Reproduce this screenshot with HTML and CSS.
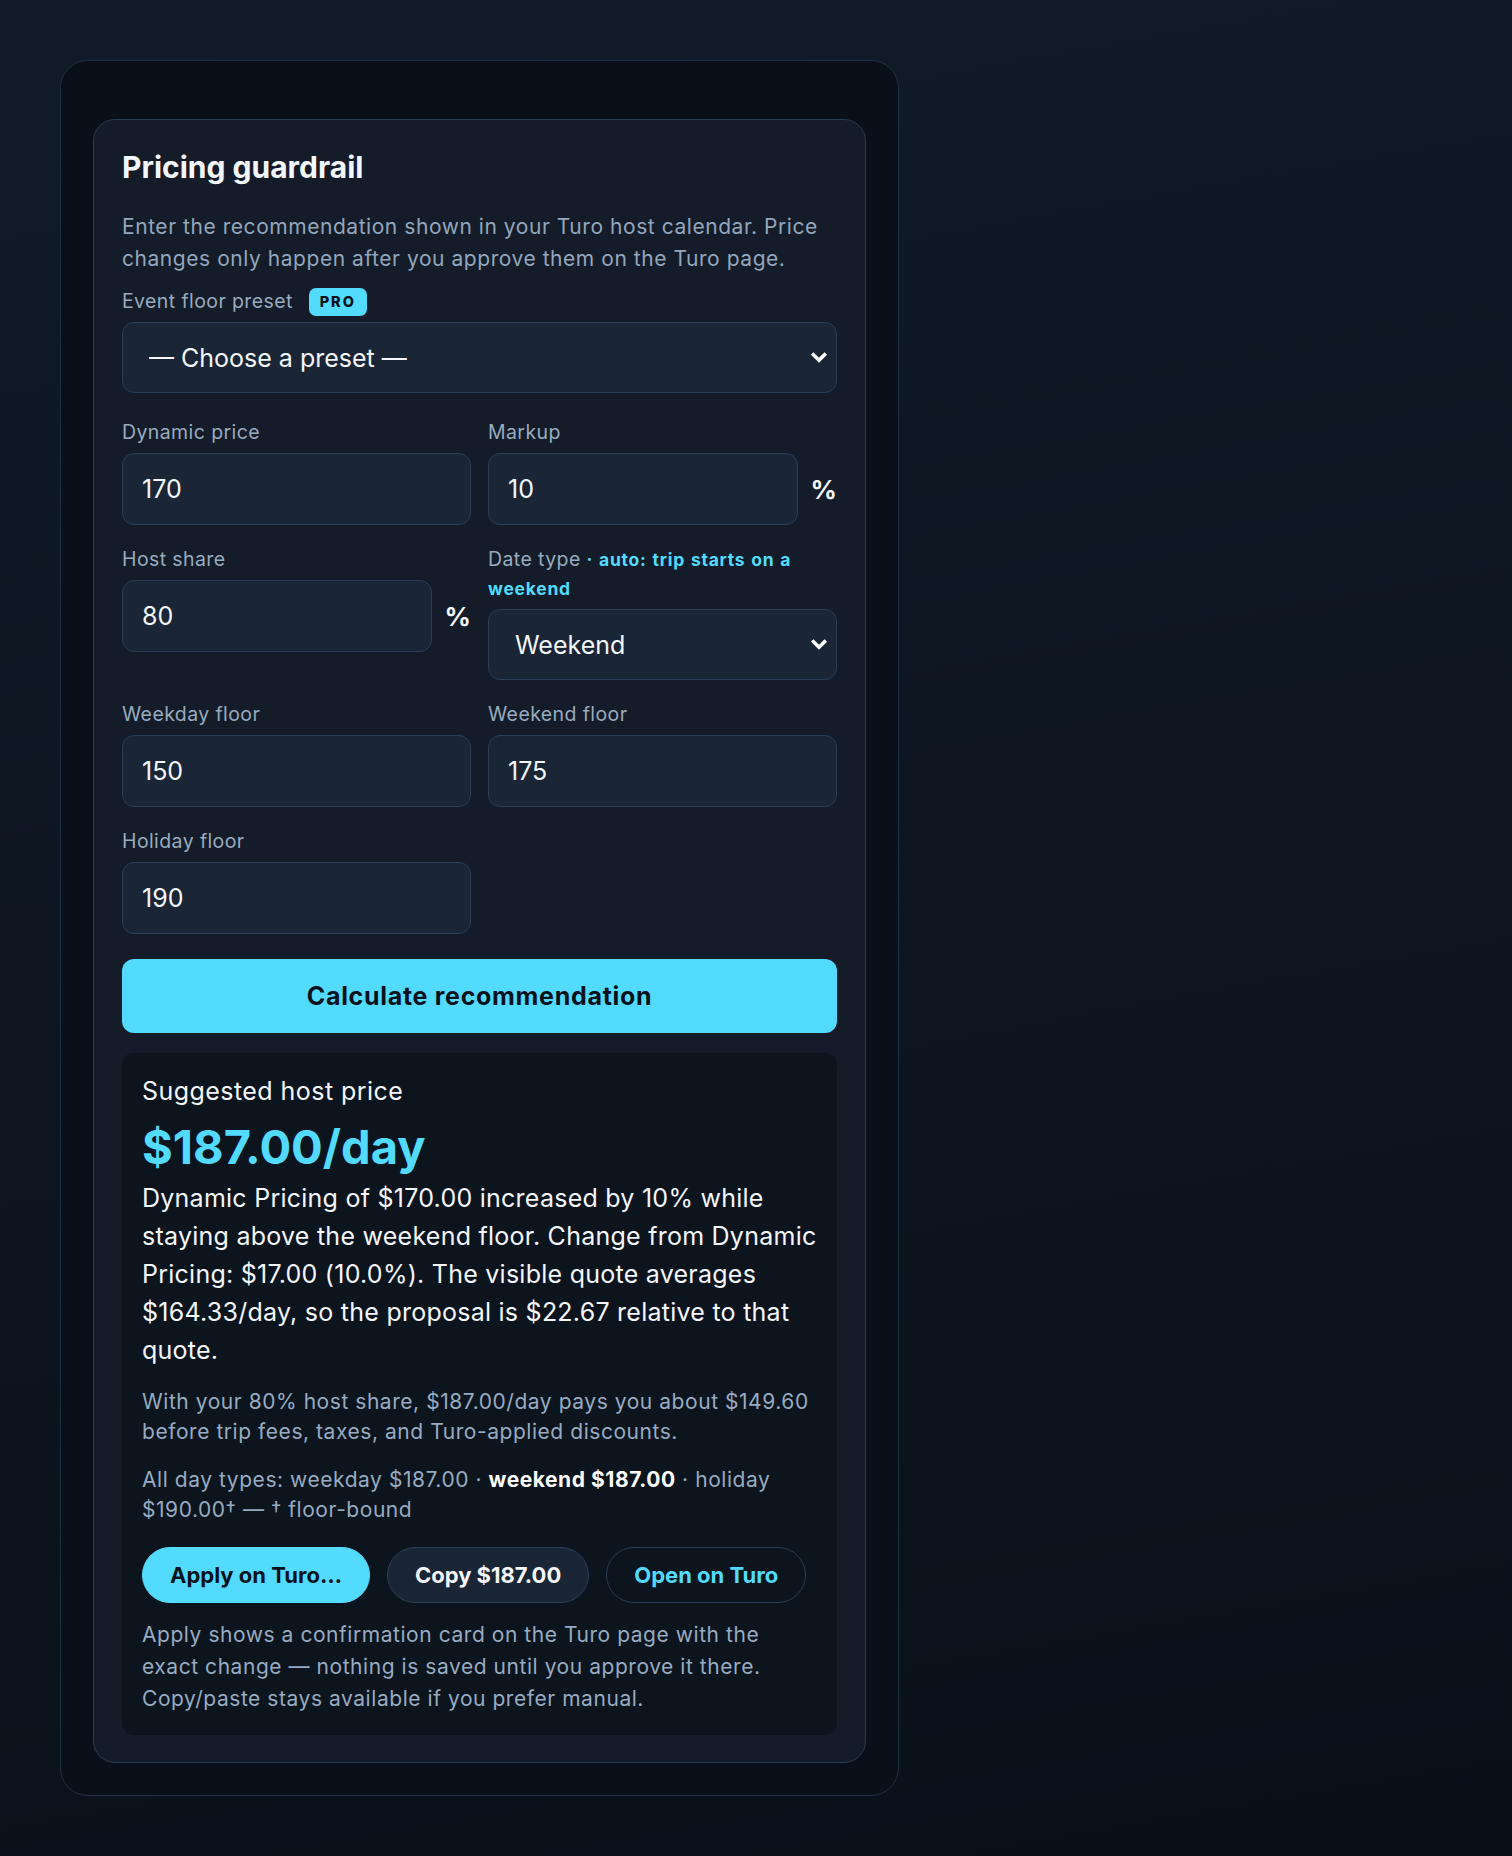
FILE: index.html
```html
<!DOCTYPE html>
<html lang="en">
<head>
  <meta charset="UTF-8">
  <meta name="viewport" content="width=device-width, initial-scale=1.0">
  <title>Pricing guardrail</title>
  <link rel="stylesheet" href="styles.css">
</head>
<body>

<div class="shell">
  <section class="panel">
    <h2 class="panel-title">Pricing guardrail</h2>
    <p class="panel-intro">Enter the recommendation shown in your Turo host calendar. Price changes only happen after you approve them on the Turo page.</p>

    <!-- Preset picker -->
    <div class="field field-preset">
      <label for="preset">Event floor preset <span class="badge">PRO</span></label>
      <div class="select-wrap">
        <select id="preset">
          <option>— Choose a preset —</option>
        </select>
        <svg class="chevron" width="18" height="12" viewBox="0 0 18 12"><polyline points="2.2,2.4 9,9.2 15.8,2.4" fill="none" stroke="#fff" stroke-width="3.6"/></svg>
      </div>
    </div>

    <!-- Price inputs -->
    <div class="field-grid">
      <div class="field">
        <label for="dynamicPrice">Dynamic price</label>
        <input id="dynamicPrice" type="text" value="170">
      </div>
      <div class="field">
        <label for="markup">Markup</label>
        <div class="with-unit">
          <input id="markup" type="text" value="10">
          <span class="unit">%</span>
        </div>
      </div>
      <div class="field">
        <label for="hostShare">Host share</label>
        <div class="with-unit">
          <input id="hostShare" type="text" value="80">
          <span class="unit">%</span>
        </div>
      </div>
      <div class="field">
        <label for="dateType">Date type <span class="hint">· auto: trip starts on a weekend</span></label>
        <div class="select-wrap">
          <select id="dateType">
            <option>Weekday</option>
            <option selected>Weekend</option>
            <option>Holiday</option>
          </select>
          <svg class="chevron" width="18" height="12" viewBox="0 0 18 12"><polyline points="2.2,2.4 9,9.2 15.8,2.4" fill="none" stroke="#fff" stroke-width="3.6"/></svg>
        </div>
      </div>
      <div class="field">
        <label for="weekdayFloor">Weekday floor</label>
        <input id="weekdayFloor" type="text" value="150">
      </div>
      <div class="field">
        <label for="weekendFloor">Weekend floor</label>
        <input id="weekendFloor" type="text" value="175">
      </div>
      <div class="field">
        <label for="holidayFloor">Holiday floor</label>
        <input id="holidayFloor" type="text" value="190">
      </div>
    </div>

    <button class="calc">Calculate recommendation</button>

    <!-- Result card -->
    <div class="result">
      <div class="result-label">Suggested host price</div>
      <div class="result-price">$187.00/day</div>
      <p class="result-summary">Dynamic Pricing of $170.00 increased by 10% while staying above the weekend floor. Change from Dynamic Pricing: $17.00 (10.0%). The visible quote averages $164.33/day, so the proposal is $22.67 relative to that quote.</p>
      <p class="result-note">With your 80% host share, $187.00/day pays you about $149.60 before trip fees, taxes, and Turo-applied discounts.</p>
      <p class="result-note">All day types: weekday $187.00 · <strong>weekend $187.00</strong> · holiday $190.00† — † floor-bound</p>
      <div class="actions">
        <button class="pill pill-primary">Apply on Turo…</button>
        <button class="pill pill-dark">Copy $187.00</button>
        <button class="pill pill-ghost">Open on Turo</button>
      </div>
      <p class="result-note result-foot">Apply shows a confirmation card on the Turo page with the exact change — nothing is saved until you approve it there. Copy/paste stays available if you prefer manual.</p>
    </div>
  </section>
</div>

</body>
</html>
```

FILE: styles.css
```css
* {
  box-sizing: border-box;
}
body {
  margin: 0;
  min-height: 1856px;
  padding: 60px 0 0 60px;
  font-family: Inter, "Noto Sans", "Liberation Sans", sans-serif;
  color: #f1f5f9;
  background: linear-gradient(170deg, #111c28 0%, #0d1621 45%, #09101a 100%);
}
.shell {
  width: 839px;
  padding: 58px 32px 32px;
  background-color: #0a1019;
  border: 1px solid #1f3043;
  border-radius: 28px;
}
.panel {
  padding: 28px 28px 27px;
  background-color: #131c28;
  border: 1px solid #2a3c51;
  border-radius: 22px;
}
.panel-title {
  margin: 0;
  font-size: 30px;
  line-height: 38px;
  font-weight: 700;
  color: #f4f7fb;
}
.panel-intro {
  margin: 25px 0 0;
  font-size: 21px;
  line-height: 32px;
  color: #93a6bc;
  letter-spacing: 0.55px;
}

/* Form fields */
.field label {
  display: block;
  margin-bottom: 6px;
  font-size: 19.5px;
  line-height: 29px;
  letter-spacing: 0.4px;
  color: #9aabbf;
}
.field-preset {
  margin-top: 12px;
}
.badge {
  display: inline-block;
  margin-left: 10px;
  padding: 0 11px;
  height: 28px;
  line-height: 28px;
  vertical-align: 1px;
  border-radius: 7px;
  background-color: #52dbff;
  color: #061018;
  font-size: 14.5px;
  font-weight: 800;
  letter-spacing: 2px;
}
.hint {
  color: #52dbff;
  font-size: 17.5px;
  font-weight: 700;
  letter-spacing: 0.75px;
  word-spacing: 1px;
}
.field input,
.field select {
  width: 100%;
  height: 72px;
  background-color: #1a2536;
  border: 1.5px solid #2b3e55;
  border-radius: 12px;
  color: #f4f7fb;
  font-family: inherit;
  outline: none;
}
.field input {
  padding: 0 19px;
  font-size: 25px;
}
.field select {
  -webkit-appearance: none;
  appearance: none;
  height: 71px;
  padding: 0 40px 0 26px;
  font-size: 25px;
}
.select-wrap {
  position: relative;
}
.chevron {
  position: absolute;
  right: 9px;
  top: 29px;
  pointer-events: none;
}
.field-grid {
  display: grid;
  grid-template-columns: 1fr 1fr;
  column-gap: 17px;
  row-gap: 20px;
  margin-top: 25px;
}
.with-unit {
  display: flex;
  align-items: center;
  gap: 13px;
}
.with-unit input {
  flex: 1;
  min-width: 0;
}
.unit {
  font-size: 26px;
  font-weight: 700;
  color: #f4f7fb;
}
.calc {
  display: block;
  width: 100%;
  height: 74px;
  margin-top: 25px;
  border: none;
  border-radius: 12px;
  background-color: #52dbff;
  color: #07111b;
  font-family: inherit;
  font-size: 25px;
  font-weight: 700;
  letter-spacing: 0.7px;
}

/* Result */
.result {
  margin-top: 20px;
  padding: 20px 12px 20px 20px;
  background-color: #0c141e;
  border-radius: 12px;
}
.result-label {
  font-size: 25px;
  line-height: 36px;
  letter-spacing: 0.45px;
  color: #f4f7fb;
}
.result-price {
  margin-top: 8px;
  font-size: 47px;
  line-height: 60px;
  font-weight: 700;
  color: #52dbff;
}
.result-summary {
  margin: 2px 0 0;
  font-size: 25px;
  line-height: 38px;
  letter-spacing: 0.25px;
  color: #f4f7fb;
}
.result-note {
  margin: 18px 0 0;
  font-size: 21px;
  line-height: 30px;
  letter-spacing: 0.55px;
  color: #98abc0;
}
.result-note strong {
  color: #fff;
}
.actions {
  display: flex;
  gap: 17px;
  margin-top: 22px;
}
.pill {
  height: 56px;
  padding: 0 27px;
  border-radius: 28px;
  font-family: inherit;
  font-size: 22px;
  font-weight: 700;
}
.pill-primary {
  background-color: #52dbff;
  border: 1.5px solid #52dbff;
  color: #07111b;
}
.pill-dark {
  background-color: #1a2536;
  border: 1.5px solid #2b3e55;
  color: #f4f7fb;
}
.pill-ghost {
  background-color: transparent;
  border: 1.5px solid #2b3e55;
  color: #52dbff;
}
.result-foot {
  margin-top: 16px;
  padding-right: 8px;
  line-height: 32px;
}
```
